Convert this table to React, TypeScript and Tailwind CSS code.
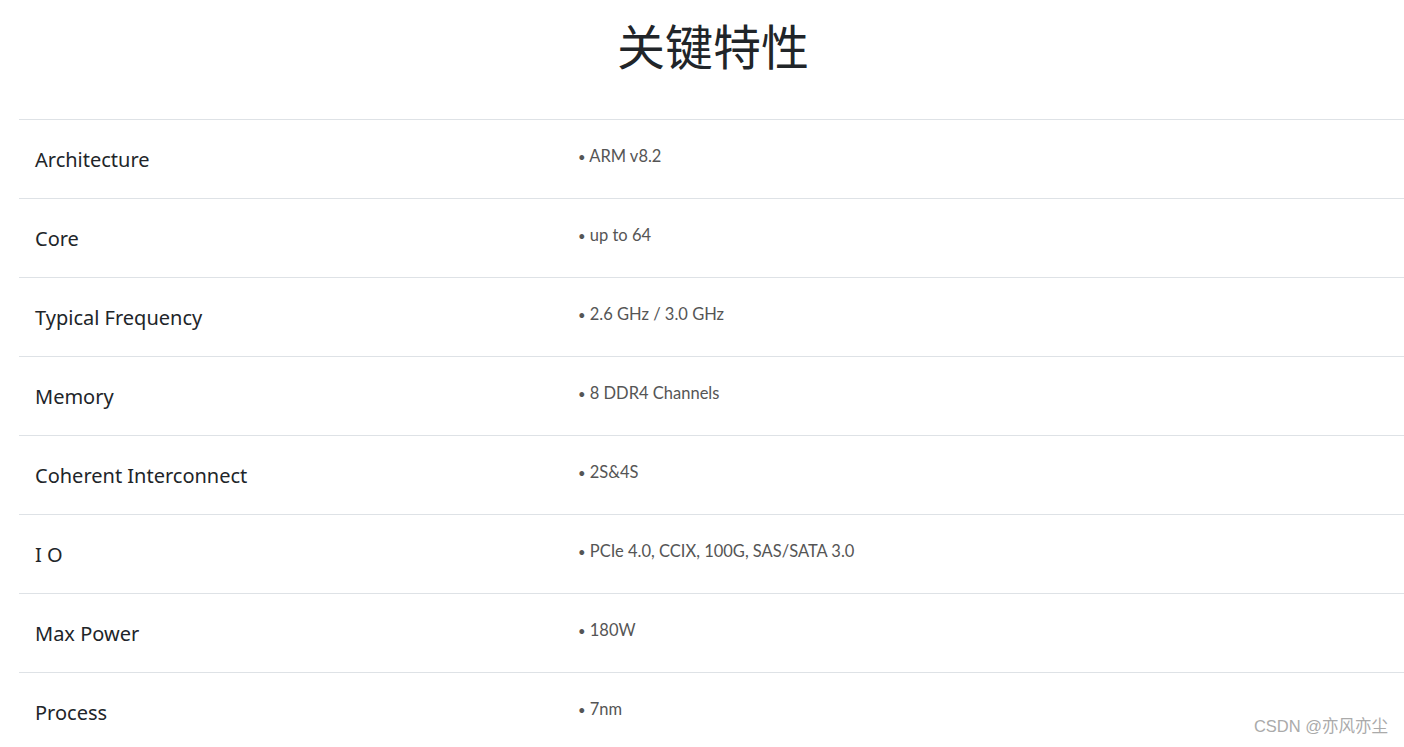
const rows = [
  { name: 'Architecture', value: 'ARM v8.2' },
  { name: 'Core', value: 'up to 64' },
  { name: 'Typical Frequency', value: '2.6 GHz / 3.0 GHz' },
  { name: 'Memory', value: '8 DDR4 Channels' },
  { name: 'Coherent Interconnect', value: '2S&4S' },
  { name: 'I O', value: 'PCIe 4.0, CCIX, 100G, SAS/SATA 3.0' },
  { name: 'Max Power', value: '180W' },
  { name: 'Process', value: '7nm' },
];

export default function App() {
  return (
    <div className="relative h-[747px] overflow-hidden bg-white">
      <h1 className="pl-[22px] pt-[14px] text-center text-[48px] leading-[60px] text-[#212529] font-['Noto_Sans_CJK_SC',sans-serif]">
        关键特性
      </h1>
      <div className="ml-[19px] mt-[45px]">
        {rows.map((r) => (
          <div key={r.name} className="flex h-[79px] border-t border-[#dee2e6]">
            <div className="flex w-[559px] items-center pl-4 pt-[1px] text-[20px] text-[#212529] font-['Noto_Sans',sans-serif]">
              {r.name}
            </div>
            <div className="pt-[24px] text-[16.5px] leading-6 text-[#555] font-['Lato',sans-serif]">
              <span className="text-[13px]">•</span> {r.value}
            </div>
          </div>
        ))}
      </div>
      <div className="absolute bottom-[8px] right-[16px] text-[16.5px] text-[#aaa] font-['Liberation_Sans','Noto_Sans_CJK_SC',sans-serif]">
        CSDN @亦风亦尘
      </div>
    </div>
  );
}
